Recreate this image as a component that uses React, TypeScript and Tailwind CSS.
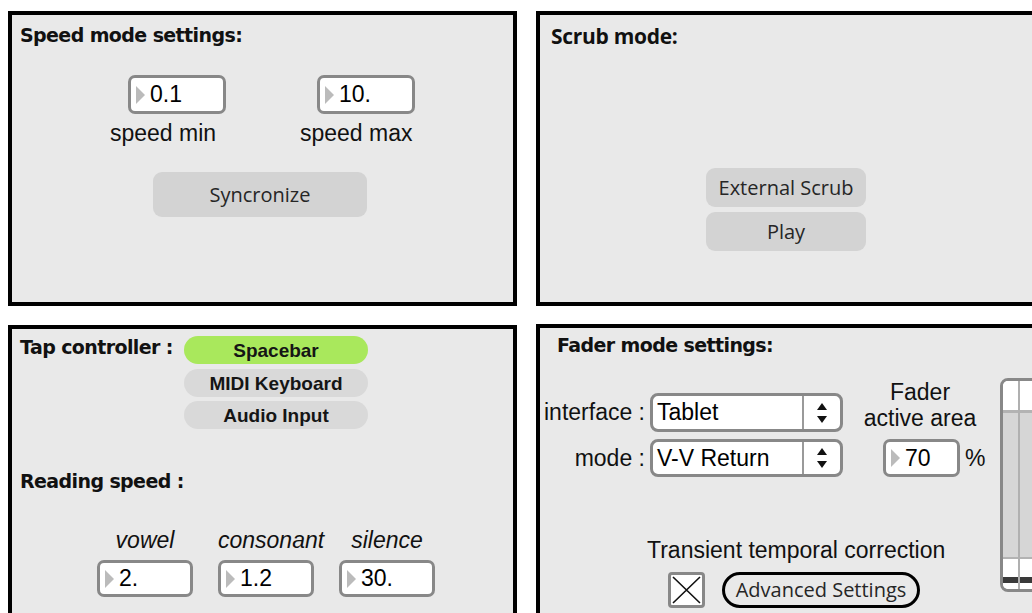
import React from "react";

const heading = "font-['DejaVu_Sans',sans-serif] font-bold text-[19px] leading-[22px] tracking-[-0.6px] text-[#111] whitespace-nowrap";
const arial = "font-['Liberation_Sans',Arial,sans-serif] text-[23px] leading-none text-[#111] whitespace-nowrap";
const soft = "font-['Open_Sans',sans-serif] text-[20px] leading-none text-[#262626] whitespace-nowrap";

function NumberBox({ value, className }: { value: string; className: string }) {
    return (
        <div
            className={`${className} flex items-center bg-white border-[3px] border-[#888] rounded-[7px] pl-[5px]`}
        >
            <svg width="9" height="18" viewBox="0 0 9 18">
                <path d="M0 0 L9 9 L0 18 Z" fill="#bbb" />
            </svg>
            <span className={`${arial} ml-[5px] text-black`}>{value}</span>
        </div>
    );
}

function Dropdown({ value, className }: { value: string; className: string }) {
    return (
        <div
            className={`${className} w-[193px] flex items-stretch bg-white border-[3px] border-[#888] rounded-[8px]`}
        >
            <div className="w-[149px] flex items-center pl-[4px]">
                <span className={`${arial} text-black`}>{value}</span>
            </div>
            <div className="w-[2px] bg-[#9a9a9a]" />
            <div className="flex-1 flex items-center justify-center">
                <svg width="12" height="22" viewBox="0 0 12 22">
                    <path d="M1 8 L6 1 L11 8 Z" fill="#111" />
                    <path d="M1 14 L6 21 L11 14 Z" fill="#111" />
                </svg>
            </div>
        </div>
    );
}

function GrayButton({ label, className }: { label: string; className: string }) {
    return (
        <div className={`${className} flex items-center justify-center bg-[#d3d3d3] rounded-[9px]`}>
            <span className={soft}>{label}</span>
        </div>
    );
}

function Pill({ label, on }: { label: string; on?: boolean }) {
    return (
        <div
            className={`w-[184px] h-[28px] rounded-full flex items-center justify-center ${
                on ? "bg-[#a9e85c]" : "bg-[#d9d9d9]"
            }`}
        >
            <span className="font-['Liberation_Sans',Arial,sans-serif] font-bold text-[19px] leading-none text-[#151515]">
                {label}
            </span>
        </div>
    );
}

function SpeedPanel() {
    return (
        <div className="w-[509px] h-[295px] shrink-0 border-4 border-black bg-[#e9e9e9] flex flex-col">
            <div className={`${heading} ml-[8px] mt-[9px]`}>Speed mode settings:</div>
            <div className="flex mt-[29px]">
                <div className="ml-[98px] w-[116px] flex flex-col items-start">
                    <NumberBox value="0.1" className="ml-[18px] w-[98px] h-[39px]" />
                    <div className={`${arial} mt-[8px]`}>speed min</div>
                </div>
                <div className="ml-[74px] flex flex-col items-start">
                    <NumberBox value="10." className="ml-[17px] w-[98px] h-[39px]" />
                    <div className={`${arial} mt-[8px]`}>speed max</div>
                </div>
            </div>
            <GrayButton label="Syncronize" className="ml-[141px] mt-[27px] w-[214px] h-[45px]" />
        </div>
    );
}

function ScrubPanel() {
    return (
        <div className="w-[600px] h-[295px] shrink-0 border-4 border-black bg-[#e9e9e9] flex flex-col">
            <div className="font-['Open_Sans',sans-serif] font-bold text-[21px] leading-[24px] tracking-[-0.3px] text-[#111] ml-[11px] mt-[9px]">
                Scrub mode:
            </div>
            <GrayButton label="External Scrub" className="ml-[166px] mt-[120px] w-[160px] h-[39px]" />
            <GrayButton label="Play" className="ml-[166px] mt-[5px] w-[160px] h-[39px]" />
        </div>
    );
}

function TapPanel() {
    return (
        <div className="w-[509px] h-[320px] shrink-0 border-4 border-black bg-[#e9e9e9] flex flex-col">
            <div className="flex items-start mt-[7px] ml-[8px]">
                <div className={`${heading} w-[164px]`}>Tap controller :</div>
                <div className="flex flex-col">
                    <Pill label="Spacebar" on />
                    <div className="mt-[5px]">
                        <Pill label="MIDI Keyboard" />
                    </div>
                    <div className="mt-[4px]">
                        <Pill label="Audio Input" />
                    </div>
                </div>
            </div>
            <div className={`${heading} ml-[8px] mt-[41px]`}>Reading speed :</div>
            <div className="ml-[85px] mt-[37px] grid grid-cols-[96px_96px_96px] gap-x-[25px] gap-y-[8px]">
                <div className={`${arial} italic text-center`}>vowel</div>
                <div className={`${arial} italic text-center`}>consonant</div>
                <div className={`${arial} italic text-center`}>silence</div>
                <NumberBox value="2." className="w-[96px] h-[37px]" />
                <NumberBox value="1.2" className="w-[96px] h-[37px]" />
                <NumberBox value="30." className="w-[96px] h-[37px]" />
            </div>
        </div>
    );
}

function FaderSlider() {
    return (
        <div className="relative ml-[23px] mt-[50px] w-[60px] h-[214px] shrink-0 border-[3px] border-[#888] rounded-[8px] bg-white flex flex-col overflow-hidden">
            <div className="h-[29px] bg-white" />
            <div className="h-[3px] bg-[#b3b3b3]" />
            <div className="flex-1 bg-[#d6d6d6]" />
            <div className="h-[2px] bg-[#b3b3b3]" />
            <div className="h-[30px] bg-white flex flex-col">
                <div className="mt-[18px] h-[6px] bg-[#3a3a3a]" />
            </div>
            <div className="absolute left-[15px] top-0 bottom-0 w-[2px] bg-[#b0b0b0]" />
        </div>
    );
}

function FaderPanel() {
    return (
        <div className="w-[600px] h-[320px] shrink-0 border-4 border-black bg-[#e9e9e9] flex items-start">
            <div className="w-[437px] shrink-0 flex flex-col">
                <div className={`${heading} ml-[17px] mt-[6px]`}>Fader mode settings:</div>
                <div className="flex items-start">
                    <div className="mt-[37px] ml-[3px] flex flex-col">
                        <div className="flex items-center h-[39px]">
                            <div className={`${arial} w-[102px] text-right`}>interface :</div>
                            <Dropdown value="Tablet" className="ml-[5px] h-[39px]" />
                        </div>
                        <div className="flex items-center h-[38px] mt-[7px]">
                            <div className={`${arial} w-[102px] text-right`}>mode :</div>
                            <Dropdown value="V-V Return" className="ml-[5px] h-[38px]" />
                        </div>
                    </div>
                    <div className="ml-[20px] mt-[23px] flex flex-col">
                        <div className="font-['Liberation_Sans',Arial,sans-serif] text-[23px] leading-[26px] text-[#111] text-center w-[114px]">
                            Fader
                            <br />
                            active area
                        </div>
                        <div className="flex items-center mt-[8px]">
                            <NumberBox value="70" className="ml-[20px] w-[77px] h-[38px]" />
                            <span className={`${arial} ml-[5px]`}>%</span>
                        </div>
                    </div>
                </div>
                <div className={`${arial} ml-[107px] mt-[62px]`}>Transient temporal correction</div>
                <div className="flex items-center ml-[128px] mt-[10px]">
                    <div className="w-[37px] h-[36px] bg-white border-[3px] border-[#888] rounded-[4px] flex items-center justify-center">
                        <svg width="29" height="28" viewBox="0 0 29 28">
                            <path d="M1 1 L28 27 M28 1 L1 27" stroke="#111" strokeWidth="1.6" />
                        </svg>
                    </div>
                    <div className="ml-[17px] w-[198px] h-[36px] border-[3px] border-black rounded-full flex items-center justify-center">
                        <span className={soft}>Advanced Settings</span>
                    </div>
                </div>
            </div>
            <FaderSlider />
        </div>
    );
}

export default function App() {
    return (
        <div className="w-[1032px] h-[613px] overflow-hidden bg-white">
            <div className="flex flex-col pt-[11px] pl-[8px] gap-[19px]">
                <div className="flex gap-[19px]">
                    <SpeedPanel />
                    <ScrubPanel />
                </div>
                <div className="flex gap-[19px] items-start">
                    <TapPanel />
                    <div className="-mt-[1px]">
                        <FaderPanel />
                    </div>
                </div>
            </div>
        </div>
    );
}
